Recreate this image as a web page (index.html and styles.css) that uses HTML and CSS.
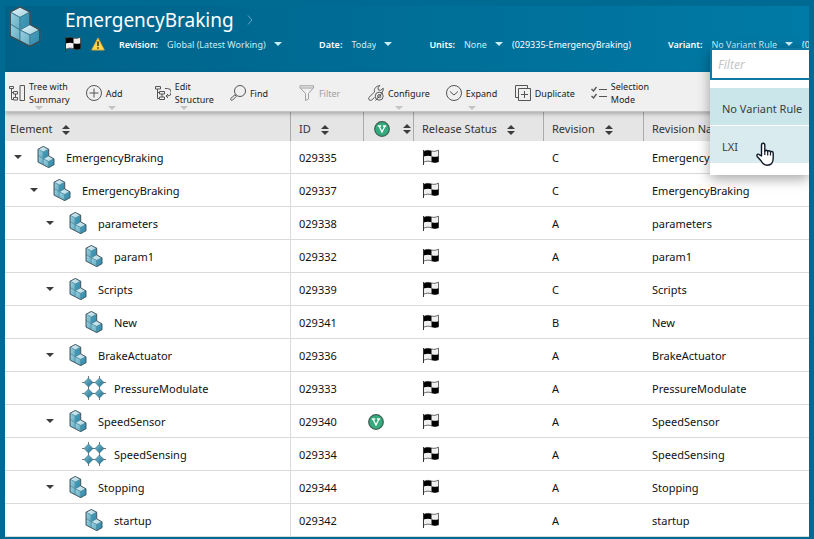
FILE: index.html
```html
<!DOCTYPE html>
<html lang="en">
<head>
<meta charset="utf-8">
<title>EmergencyBraking</title>
<link rel="stylesheet" href="styles.css">
</head>
<body>
<svg class="sprite" aria-hidden="true">
  <defs>
    <linearGradient id="gTop" x1="0" y1="0" x2="1" y2="1"><stop offset="0" stop-color="#e4f3f7"/><stop offset="1" stop-color="#9fcfdd"/></linearGradient>
    <linearGradient id="gLeft" x1="0" y1="0" x2="1" y2="1"><stop offset="0" stop-color="#9bd0df"/><stop offset="1" stop-color="#62adc4"/></linearGradient>
    <linearGradient id="gRight" x1="0" y1="0" x2="1" y2="1"><stop offset="0" stop-color="#4a9fbc"/><stop offset="1" stop-color="#2f8bad"/></linearGradient>
    <linearGradient id="gDia" x1="0" y1="0" x2="1" y2="1"><stop offset="0" stop-color="#7fbdd0"/><stop offset="1" stop-color="#1b6f8e"/></linearGradient>
  </defs>
  <symbol id="cubes" viewBox="0 0 31 41">
    <g class="faces" stroke-linejoin="round">
      <path fill="url(#gTop)" d="M10.5 .8 20.5 6 10.5 11.5 .7 6z"/>
      <path fill="url(#gLeft)" d="M.7 6l9.800 5.500V24L.7 18z"/>
      <path fill="url(#gRight)" d="M10.500 11.500l10-5.500V18.500L10.500 24z"/>
      <path fill="url(#gLeft)" d="M.7 18l9.800 6v11L.7 30z"/>
      <path fill="url(#gTop)" d="M20.500 18.500l9.800 5.300-9.800 5.200-10-5z"/>
      <path fill="url(#gLeft)" d="M10.500 24l10 5v11.300l-10-5.300z"/>
      <path fill="url(#gRight)" d="M20.500 29l9.800-5.200V35l-9.800 5.300z"/>
    </g>
    <path class="rim" fill="none" stroke-linejoin="round" d="M10.500 .8 20.500 6V18.500l9.800 5.300V35l-9.800 5.300L.7 30V6z"/>
  </symbol>
  <symbol id="diamonds" viewBox="0 0 24 24">
    <path d="M6.500 0v24M17.500 0v24M0 6.500h24M0 17.500h24" stroke="#777" fill="none"/>
    <g fill="url(#gDia)" stroke="#2c6f88" stroke-width=".6">
      <path d="M6.500 2l4.500 4.500-4.500 4.500L2 6.500z"/><path d="M17.500 2l4.500 4.500-4.500 4.500L13 6.500z"/>
      <path d="M6.500 13l4.500 4.500-4.500 4.500L2 17.500z"/><path d="M17.500 13l4.500 4.500-4.500 4.500-4.500-4.500z"/>
    </g>
  </symbol>
  <symbol id="flag" viewBox="0 0 16 16">
    <path class="cloth" d="M.5 2.500C3.500 1 6 1.200 8.500 2S13 2.200 15.500 1.200V12.800C13 13.800 11 13.800 8.500 12.800S3.500 12 .5 13.200z"/>
    <path class="check" d="M.5 2.500C3.500 1 6 1.200 8.500 2V7.200C6 6.500 3.500 6.500 .5 7.500zM8.500 7.200c2.500 .8 4.500 .8 7 0v5.600c-2.500 1-4.500 1-7 0z"/>
    <path class="pole" d="M.5 1v15"/>
  </symbol>
  <symbol id="vmark" viewBox="0 0 16 16">
    <circle cx="8" cy="8" r="7.300" fill="#34ab7c" stroke="#3d5f55" stroke-width="1.200"/>
    <path d="M3.800 5h3.400M9 5h3.200M5 5l3 6 3-6" fill="none" stroke="#fff" stroke-width="1.300"/>
  </symbol>
  <symbol id="sort" viewBox="0 0 8 10"><path d="M4 0l4 4H0zM0 6h8l-4 4z"/></symbol>
  <symbol id="down" viewBox="0 0 8 4"><path d="M0 0h8L4 4z"/></symbol>
</svg>

<div class="app">
  <header class="banner">
    <svg class="banner-icon"><use href="#cubes"/></svg>
    <div class="banner-main">
      <div class="title-row">
        <h1>EmergencyBraking</h1>
        <svg class="crumb" viewBox="0 0 6 10"><path d="M1 .5L5 5 1 9.500"/></svg>
      </div>
      <div class="context">
        <svg class="flag flag-soft" role="img" aria-label="Released"><use href="#flag"/></svg>
        <svg class="warn" viewBox="0 0 14 14" role="img" aria-label="Warning">
          <path d="M7 1 13.300 13H.7z" fill="#ffd84d" stroke="#d9a93a" stroke-linejoin="round"/><path d="M7 4.500v4.500M7 10.300v1.500" stroke="#222" stroke-width="1.400"/>
        </svg>
        <div class="field">
          <label for="revision">Revision:</label>
          <span class="pick"><select id="revision"><option>Global (Latest Working)</option></select><svg class="down"><use href="#down"/></svg></span>
        </div>
        <div class="field">
          <label for="date">Date:</label>
          <span class="pick"><select id="date"><option>Today</option></select><svg class="down"><use href="#down"/></svg></span>
        </div>
        <div class="field">
          <label for="units">Units:</label>
          <span class="pick"><select id="units"><option>None</option></select><svg class="down"><use href="#down"/></svg></span>
          <span class="note">(029335-EmergencyBraking)</span>
        </div>
        <div class="field variant">
          <label for="variant">Variant:</label>
          <button class="pick" id="variant" aria-haspopup="listbox" aria-expanded="true">No Variant Rule<svg class="down"><use href="#down"/></svg></button>
          <span class="note">(0</span>
        </div>
      </div>
    </div>
  </header>

  <div class="menu">
    <input type="text" placeholder="Filter" aria-label="Filter">
    <ul role="listbox" aria-label="Variant">
      <li role="option" aria-selected="true">No Variant Rule</li>
      <li role="option" aria-selected="false">LXI
        <svg class="hand" viewBox="0 0 18 24"><path d="M5.500 14V3.200C5.500.6 8.800.6 8.800 3.200V9.500c0-1.800 2.700-1.700 2.900.2 .2-1.400 2.500-1.300 2.800.5 .4-1.200 2.600-1 2.700.9V16c0 4.500-2 7.200-6 7.200-3.500 0-4.800-1.700-6-4.200L1.200 14.500c-1-2.200 1-3 2.300-1.700z" fill="#fff" stroke="#111827" stroke-width="1.400" stroke-linejoin="round"/><path d="M8.800 9v4M11.700 10v3.500M14.500 10.500v3" stroke="#111827" stroke-width="1.200"/></svg>
      </li>
    </ul>
  </div>

  <div class="toolbar" role="toolbar" aria-label="Actions">
    <button><svg viewBox="0 0 16 16"><path d="M.5 1.500h4v2h-4zM2.500 3.500v11h2M2.500 7.500h2M4.500 6.500h4v2.500h-4zM4.500 12.500h4v2.500h-4zM6.500 9v3.500M11 .5h4.500v15H11z"/></svg><span>Tree with<br>Summary</span><svg class="more"><use href="#down"/></svg></button>
    <button><svg viewBox="0 0 16 16"><circle cx="8" cy="8" r="7.500"/><path d="M8 3.500v9M3.500 8h9"/></svg><span>Add</span><svg class="more"><use href="#down"/></svg></button>
    <button><svg viewBox="0 0 16 16"><path d="M.5 1.500h5v2.500h-5zM2.500 4v9.500h2M2.500 7.500h2M4.500 6.500h5v2.500h-5zM4.500 12h5v2.500h-5zM7 9v3M10 3.500h2.500a3 3 0 0 1 0 7.500h-1.500M13 9l-2 2 2 2"/></svg><span>Edit<br>Structure</span><svg class="more"><use href="#down"/></svg></button>
    <button><svg viewBox="0 0 16 16"><circle cx="10" cy="6" r="5.500"/><path d="M6 9.800l-1 1M4.800 9.800L.8 13.500c-.8 1 .8 2.500 1.700 1.700L6.300 11.300z"/></svg><span>Find</span></button>
    <button disabled><svg viewBox="0 0 16 16"><path d="M1 .8h13.500v2L9.500 8.500v5.500l-3 1.500V8.500L1 2.800zM1.500 3h12.500"/></svg><span>Filter</span></button>
    <button><svg viewBox="0 0 16 16"><path d="M6.500 7C5.800 3.500 8 1 11.800.6L10 2.800l.4 2.200 2.200.4L15.200 3.200c.4 2.200-.6 4-2 4.600M6.500 7L.9 12.500c-1 1.800.9 3.700 2.700 2.600L6.500 12.500"/><circle cx="11.200" cy="11.200" r="4"/><circle cx="11.200" cy="11.200" r="1.600"/><path d="M14.500 7.500l-7 8"/></svg><span>Configure</span><svg class="more"><use href="#down"/></svg></button>
    <button><svg viewBox="0 0 16 16"><circle cx="8" cy="8" r="7.500"/><path d="M4 6.500l4 3.500 4-3.500"/></svg><span>Expand</span><svg class="more"><use href="#down"/></svg></button>
    <button><svg viewBox="0 0 16 16"><path d="M3.500 12.500h-3V.5h12v3M3.500 3.500h12v12h-12zM9.500 6v7M6 9.500h7"/></svg><span>Duplicate</span></button>
    <button><svg viewBox="0 0 16 16"><path d="M8 4.500h8M8 11.500h8" /><path d="M.5 4l2 2L5.500 2M.5 11l2 2 3-4" stroke-width="1.300"/></svg><span>Selection<br>Mode</span></button>
  </div>

  <table>
    <colgroup><col class="c-el"><col class="c-id"><col class="c-v"><col class="c-st"><col class="c-rev"><col></colgroup>
    <thead>
      <tr>
        <th>Element<svg class="sort"><use href="#sort"/></svg></th>
        <th>ID<svg class="sort"><use href="#sort"/></svg></th>
        <th class="v-head"><svg class="v" role="img" aria-label="Variant"><use href="#vmark"/></svg><svg class="sort"><use href="#sort"/></svg></th>
        <th>Release Status<svg class="sort"><use href="#sort"/></svg></th>
        <th>Revision<svg class="sort"><use href="#sort"/></svg></th>
        <th>Revision Name</th>
      </tr>
    </thead>
    <tbody>
      <tr><td><div class="node l0"><svg class="down"><use href="#down"/></svg><svg class="part"><use href="#cubes"/></svg>EmergencyBraking</div></td><td>029335</td><td></td><td><svg class="flag"><use href="#flag"/></svg></td><td>C</td><td>EmergencyBraking</td></tr>
      <tr><td><div class="node l1"><svg class="down"><use href="#down"/></svg><svg class="part"><use href="#cubes"/></svg>EmergencyBraking</div></td><td>029337</td><td></td><td><svg class="flag"><use href="#flag"/></svg></td><td>C</td><td>EmergencyBraking</td></tr>
      <tr><td><div class="node l2"><svg class="down"><use href="#down"/></svg><svg class="part"><use href="#cubes"/></svg>parameters</div></td><td>029338</td><td></td><td><svg class="flag"><use href="#flag"/></svg></td><td>A</td><td>parameters</td></tr>
      <tr><td><div class="node l3"><svg class="down"></svg><svg class="part"><use href="#cubes"/></svg>param1</div></td><td>029332</td><td></td><td><svg class="flag"><use href="#flag"/></svg></td><td>A</td><td>param1</td></tr>
      <tr><td><div class="node l2"><svg class="down"><use href="#down"/></svg><svg class="part"><use href="#cubes"/></svg>Scripts</div></td><td>029339</td><td></td><td><svg class="flag"><use href="#flag"/></svg></td><td>C</td><td>Scripts</td></tr>
      <tr><td><div class="node l3"><svg class="down"></svg><svg class="part"><use href="#cubes"/></svg>New</div></td><td>029341</td><td></td><td><svg class="flag"><use href="#flag"/></svg></td><td>B</td><td>New</td></tr>
      <tr><td><div class="node l2"><svg class="down"><use href="#down"/></svg><svg class="part"><use href="#cubes"/></svg>BrakeActuator</div></td><td>029336</td><td></td><td><svg class="flag"><use href="#flag"/></svg></td><td>A</td><td>BrakeActuator</td></tr>
      <tr><td><div class="node l3"><svg class="down"></svg><svg class="part part-grid"><use href="#diamonds"/></svg>PressureModulate</div></td><td>029333</td><td></td><td><svg class="flag"><use href="#flag"/></svg></td><td>A</td><td>PressureModulate</td></tr>
      <tr><td><div class="node l2"><svg class="down"><use href="#down"/></svg><svg class="part"><use href="#cubes"/></svg>SpeedSensor</div></td><td>029340</td><td class="v-cell"><svg class="v" role="img" aria-label="Variant"><use href="#vmark"/></svg></td><td><svg class="flag"><use href="#flag"/></svg></td><td>A</td><td>SpeedSensor</td></tr>
      <tr><td><div class="node l3"><svg class="down"></svg><svg class="part part-grid"><use href="#diamonds"/></svg>SpeedSensing</div></td><td>029334</td><td></td><td><svg class="flag"><use href="#flag"/></svg></td><td>A</td><td>SpeedSensing</td></tr>
      <tr><td><div class="node l2"><svg class="down"><use href="#down"/></svg><svg class="part"><use href="#cubes"/></svg>Stopping</div></td><td>029344</td><td></td><td><svg class="flag"><use href="#flag"/></svg></td><td>A</td><td>Stopping</td></tr>
      <tr><td><div class="node l3"><svg class="down"></svg><svg class="part"><use href="#cubes"/></svg>startup</div></td><td>029342</td><td></td><td><svg class="flag"><use href="#flag"/></svg></td><td>A</td><td>startup</td></tr>
    </tbody>
  </table>
</div>
</body>
</html>
```
FILE: styles.css
```css
* { box-sizing: border-box; }
body {
  margin: 0;
  padding: 6px 5px 2px;
  background: #006b92;
  font-family: "Noto Sans", "Open Sans", sans-serif;
  font-size: 11px;
  color: #111;
}
.sprite { position: absolute; width: 0; height: 0; }
button, select, input { font: inherit; color: inherit; margin: 0; }
button, select { appearance: none; border: 0; background: none; padding: 0; }

.app { position: relative; overflow: hidden; background: #fff; }

/* banner */
.banner {
  display: flex;
  gap: 24px;
  height: 66px;
  padding-left: 4px;
  background: linear-gradient(90deg, #006288, #007aa6);
  color: #fff;
}
.banner-icon { flex: none; width: 32px; height: 41px; }
.faces { stroke: #3f7f95; stroke-width: 1; }
.rim { stroke: #3d4a50; stroke-width: 1.4; }
.part .faces { stroke: #5fa3b8; }
.part .rim { stroke: #8d9a9f; stroke-width: 1.6; }
.title-row { display: flex; align-items: center; gap: 13px; height: 28px; }
h1 { margin: 0; font-size: 19px; font-weight: 400; line-height: 28px; }
.crumb { width: 6px; height: 10px; fill: none; stroke: #5fa9c4; }
.context { display: flex; align-items: center; height: 20px; font-size: 9px; white-space: nowrap; }
.field { display: flex; align-items: center; gap: 9px; margin-right: 37px; }
.field label { font-weight: 600; }
.pick { display: flex; align-items: center; gap: 8px; color: #c9eef6; }
.down { flex: none; width: 8px; height: 4px; fill: currentColor; }
.warn { flex: none; width: 14px; height: 14px; margin: 0 14px 0 10px; }

.flag { display: block; flex: none; width: 16px; height: 16px; }
.cloth { fill: #f0f0f0; stroke: #444; stroke-width: .8; }
.check { fill: #000; }
.pole { stroke: #333; }
.flag-soft .cloth { stroke: #3c3c3c; }
.flag-soft .check { fill: #3c3c3c; }

/* variant menu */
.menu {
  position: absolute;
  z-index: 2;
  top: 42px;
  right: 0;
  width: 99px;
  padding-bottom: 12px;
  background: #fff;
  box-shadow: 0 4px 12px rgba(0, 0, 0, .35);
}
.menu input {
  display: block;
  width: 100%;
  height: 32px;
  padding: 0 6px;
  border: 2px solid #0f78a3;
  border-right: 0;
  border-radius: 0;
  outline: 0;
  background: #fff;
  font-size: 12px;
}
.menu input::placeholder { color: #c4c4c4; font-style: italic; opacity: 1; }
.menu ul { display: grid; gap: 1px; margin: 8px 0 0; padding: 0; list-style: none; }
.menu li { position: relative; height: 37px; padding: 3px 0 0 12px; line-height: 36px; background: #d9ebef; color: #3c3c3c; white-space: nowrap; }
.menu li[aria-selected="true"] { background: #cbe6ea; }
.hand { position: absolute; top: 16px; left: 46px; width: 18px; height: 24px; }

/* toolbar */
.toolbar {
  position: relative;
  z-index: 1;
  display: flex;
  gap: 16px;
  height: 40px;
  padding: 0 4px;
  background: #f0f0f0;
  border-bottom: 1px solid #c4c4c4;
  box-shadow: 0 2px 4px rgba(0, 0, 0, .25);
}
.toolbar button {
  position: relative;
  flex: none;
  display: flex;
  align-items: center;
  gap: 4px;
  min-width: 53px;
  padding-top: 3px;
  color: #222;
  font-size: 9px;
  line-height: 13px;
  text-align: left;
}
.toolbar button > svg { flex: none; width: 16px; height: 16px; fill: none; stroke: #555; }
.toolbar button:disabled { color: #a0a0a0; }
.toolbar button:disabled > svg { stroke: #a0a0a0; }
.toolbar button > .more { position: absolute; bottom: 1px; left: calc(50% - 4px); width: 8px; height: 4px; fill: #c4c4c4; stroke: none; }

/* table */
table { width: 100%; table-layout: fixed; border-collapse: separate; border-spacing: 0; }
.c-el { width: 286px; }
.c-id { width: 73px; }
.c-v { width: 50px; }
.c-st { width: 130px; }
.c-rev { width: 100px; }
th {
  height: 29px;
  padding: 4px 0 0 8px;
  background: #e5e5e5;
  border-right: 1px solid #aaa;
  color: #333;
  font-weight: 400;
  text-align: left;
  white-space: nowrap;
}
th:first-child { padding-left: 5px; }
th:last-child { border-right: 0; }
.sort { width: 8px; height: 10px; margin-left: 10px; fill: #3c3c3c; vertical-align: middle; }
.v { width: 16px; height: 16px; vertical-align: middle; }
.v-head { padding-left: 10px; }
.v-head .sort { margin-left: 13px; }
td { height: 33px; padding: 0 0 0 8px; border-bottom: 1px solid #dadada; white-space: nowrap; }
td:first-child { padding: 0; border-right: 1px solid #dadada; }
td .flag { margin-left: 1px; }
.v-cell { padding-left: 4px; }
.node { display: flex; align-items: center; }
.node .down { margin-right: 12px; color: #3c3c3c; }
.part { flex: none; width: 24px; height: 22px; margin-right: 8px; }
.part-grid { height: 24px; }
.l0 { padding-left: 9px; }
.l1 { padding-left: 25px; }
.l2 { padding-left: 41px; }
.l3 { padding-left: 57px; }
```
